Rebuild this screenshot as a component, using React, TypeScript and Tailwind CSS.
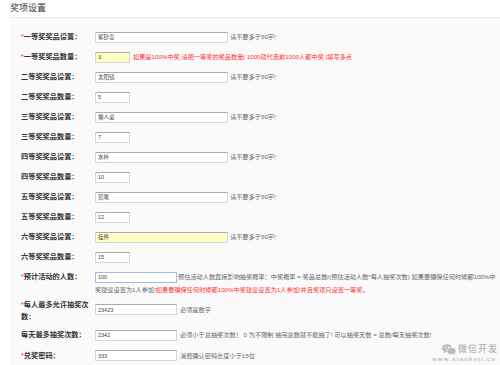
import React from "react";

type Row = {
  label: string;
  required?: boolean;
  value: string;
  size: "wide" | "narrow" | "mid";
  yellow?: boolean;
  hint?: string;
  red?: string;
};

const rows: Row[] = [
  { label: "一等奖奖品设置：", required: true, value: "紫砂壶", size: "wide", hint: "请不要多于50字!" },
  { label: "一等奖奖品数量：", required: true, value: "3", size: "narrow", yellow: true, red: "如果是100%中奖,请把一等奖的奖品数量[ 1000就代表前1000人都中奖 ]填写多点" },
  { label: "二等奖奖品设置：", value: "太阳镜", size: "wide", hint: "请不要多于50字!" },
  { label: "二等奖奖品数量：", value: "5", size: "narrow" },
  { label: "三等奖奖品设置：", value: "懒人桌", size: "wide", hint: "请不要多于50字!" },
  { label: "三等奖奖品数量：", value: "7", size: "narrow" },
  { label: "四等奖奖品设置：", value: "水杯", size: "wide", hint: "请不要多于50字!" },
  { label: "四等奖奖品数量：", value: "10", size: "narrow" },
  { label: "五等奖奖品设置：", value: "铅笔", size: "wide", hint: "请不要多于50字!" },
  { label: "五等奖奖品数量：", value: "12", size: "narrow" },
  { label: "六等奖奖品设置：", value: "挂件", size: "wide", yellow: true, hint: "请不要多于50字!" },
  { label: "六等奖奖品数量：", value: "15", size: "narrow" },
];

const widths = { wide: "w-[133px]", narrow: "w-[35px]", mid: "w-[82px]" };

function Label({ text, required }: { text: string; required?: boolean }) {
  return (
    <div className="w-[74px] shrink-0 text-[7.2px] leading-[12px] font-bold text-[#333]">
      {required && <span className="text-[#e33] font-normal">*</span>}
      {text}
    </div>
  );
}

function Field({ value, size, yellow, blue }: { value: string; size: Row["size"]; yellow?: boolean; blue?: boolean }) {
  return (
    <input
      readOnly
      value={value}
      className={`${widths[size]} h-[11px] shrink-0 border ${blue ? "border-[#9cc0e4]" : "border-[#d6d6d6] border-t-[#aaa]"} ${yellow ? "bg-[#ffffc4]" : "bg-white"} pl-[2px] text-[5.5px] text-[#444] outline-none`}
    />
  );
}

export default function App() {
  return (
    <div
      className="relative w-[500px] h-[365px] overflow-hidden bg-white"
      style={{ fontFamily: '"Liberation Sans", "Noto Sans CJK SC", sans-serif' }}
    >
      <div className="h-[17px] pl-[10px] pt-[3px] text-[9px] leading-[11px] text-[#333]">奖项设置</div>
      <div className="ml-[10px] h-[348px] border-t border-[#ececec] bg-[#fafafa] pl-[11px] pt-[9px]">
        {rows.map((r) => (
          <div key={r.label} className="flex h-[20px] items-center">
            <Label text={r.label} required={r.required} />
            <Field value={r.value} size={r.size} yellow={r.yellow} />
            {r.hint && <span className="ml-[2px] whitespace-nowrap text-[6.2px] text-[#666]">{r.hint}</span>}
            {r.red && <span className="ml-[3px] whitespace-nowrap text-[6.2px] text-[#f33]">{r.red}</span>}
          </div>
        ))}

        <div className="flex h-[20px] items-center">
          <Label text="预计活动的人数：" required />
          <Field value="100" size="mid" blue />
          <span className="ml-[1px] whitespace-nowrap text-[6.2px] text-[#666]">
            预估活动人数直接影响抽奖概率：中奖概率 = 奖品总数/(预估活动人数*每人抽奖次数) 如果要确保任何时候都100%中
          </span>
        </div>
        <div className="-mt-[2px] pl-[74px] whitespace-nowrap text-[6.2px] leading-[10px] text-[#666]">
          奖建议设置为1人参加!<span className="text-[#f33]">如果要确保任何时候都100%中奖建议设置为1人参加!并且奖项只设置一等奖。</span>
        </div>

        <div className="mt-[4px] flex h-[26px] items-start">
          <Label text="每人最多允许抽奖次数：" required />
          <div className="mt-[5px] flex items-center">
            <Field value="23423" size="mid" />
            <span className="ml-[3px] whitespace-nowrap text-[6.2px] text-[#666]">必须是数字</span>
          </div>
        </div>
        <div className="flex h-[20px] items-center">
          <Label text="每天最多抽奖次数：" />
          <Field value="2342" size="mid" />
          <span className="ml-[3px] whitespace-nowrap text-[6.2px] text-[#666]">
            必须小于总抽奖次数！ 0 为不限制 抽完总数就不能抽了! 可以抽奖天数 = 总数/每天抽奖次数!
          </span>
        </div>
        <div className="flex h-[21px] items-center">
          <Label text="兑奖密码：" required />
          <Field value="333" size="mid" />
          <span className="ml-[3px] whitespace-nowrap text-[6.2px] text-[#666]">消费确认密码长度小于15位</span>
        </div>
      </div>

      <div className="absolute right-0 bottom-0 w-[68px] h-[22px] text-[#bdbdbd]">
        <div className="flex items-center gap-[2px] pl-[10px]">
          <svg width="14" height="11" viewBox="0 0 28 22" fill="currentColor">
            <ellipse cx="10" cy="8.5" rx="10" ry="8" />
            <path d="M4 14 L3 19 L8 15.5 Z" />
            <ellipse cx="19" cy="14" rx="9" ry="7" stroke="#fafafa" strokeWidth="1.5" />
            <path d="M24 19 L26 22 L21 20 Z" />
            <circle cx="6.5" cy="6.5" r="1.3" fill="#fafafa" />
            <circle cx="13" cy="6.5" r="1.3" fill="#fafafa" />
          </svg>
          <span className="text-[9px] leading-[12px] font-bold tracking-[1px]">微信开发</span>
        </div>
        <div className="whitespace-nowrap text-[6px] leading-[8px] tracking-[1.2px] font-bold">www.siankeji.cn</div>
      </div>
    </div>
  );
}
